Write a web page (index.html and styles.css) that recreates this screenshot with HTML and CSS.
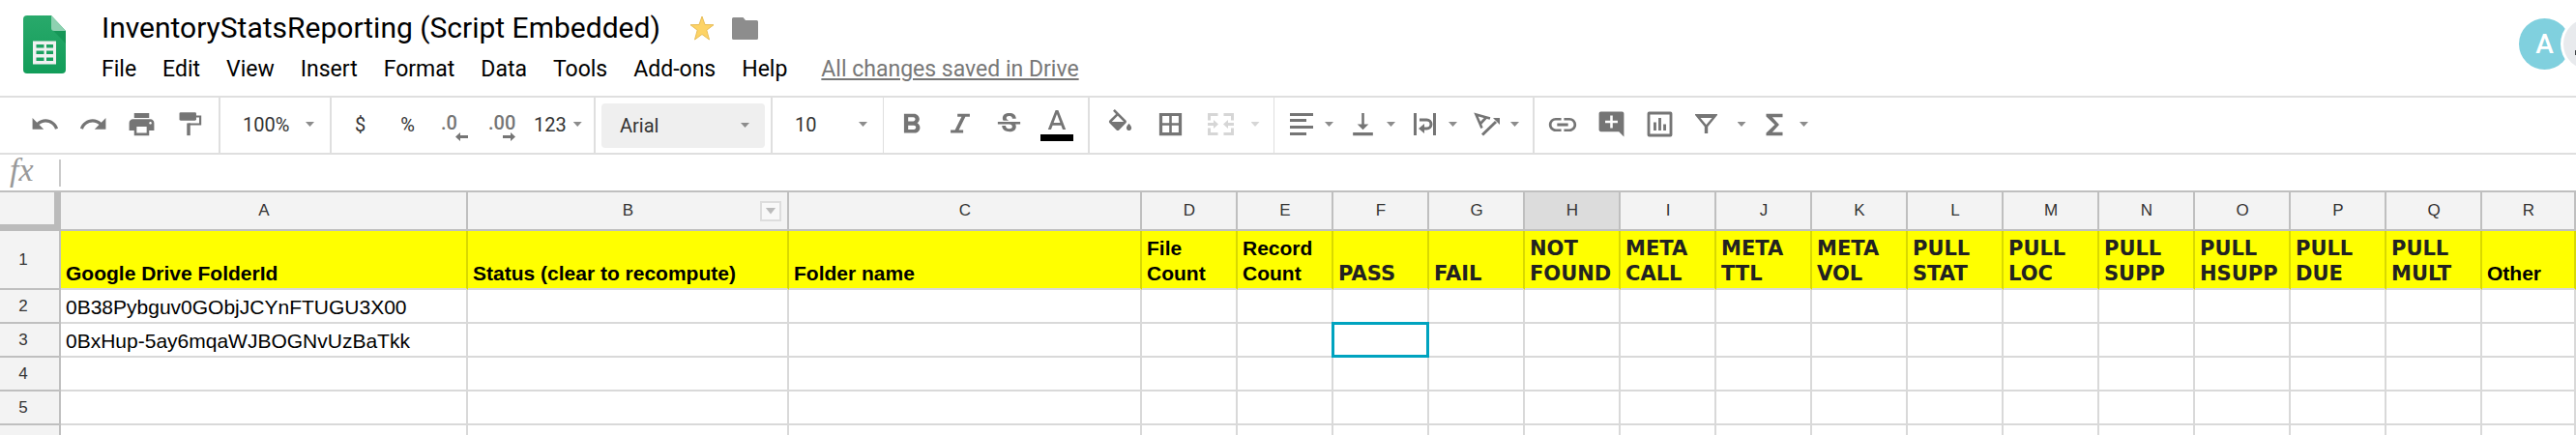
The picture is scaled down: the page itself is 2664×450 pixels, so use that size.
FILE: index.html
```html
<!DOCTYPE html>
<html lang="en">
<head>
<meta charset="utf-8">
<title>InventoryStatsReporting (Script Embedded)</title>
<link rel="stylesheet" href="styles.css">
</head>
<body>
<header class="header">
  <svg class="logo" viewBox="0 0 44 60" aria-hidden="true">
    <defs><linearGradient id="green" x1="0" y1="0" x2="0" y2="1"><stop offset="0" stop-color="#29a96b"/><stop offset="1" stop-color="#129d59"/></linearGradient></defs>
    <path fill="url(#green)" d="M4 0H29L44 16V56a4 4 0 0 1-4 4H4a4 4 0 0 1-4-4V4a4 4 0 0 1 4-4z"/>
    <path fill="#0c8a4c" opacity=".55" d="M30 14.500 44 29V16z"/>
    <path fill="#8ed1b1" d="M29 0 44 16H32a3 3 0 0 1-3-3z"/>
    <path fill="#f1f1f1" fill-rule="evenodd" d="M10 26.500h24v24H10zM13.500 30v3.500h8V30zM24 30v3.500h7V30zM13.500 36.500V40h8v-3.500zM24 36.500V40h7v-3.500zM13.500 43.500V47h8v-3.500zM24 43.500V47h7v-3.500z"/>
  </svg>
  <div class="heading">
    <div class="title-row">
      <h1 class="title">InventoryStatsReporting (Script Embedded)</h1>
      <button class="plain" aria-label="Star"><svg class="star" viewBox="0 0 26 26"><path fill="#fdd365" stroke="#e8bd57" d="M13 1l3 8.500 9 .2-7.200 5.500L20.500 25 13 19.500 5.500 25l2.700-9.800L1 9.700l9-.2z"/></svg></button>
      <button class="plain" aria-label="Move to folder"><svg class="folder" viewBox="0 0 27 23"><path fill="#8d8d8d" d="M1.500 0h10L14 3h11.500A1.500 1.500 0 0 1 27 4.500v17a1.500 1.500 0 0 1-1.500 1.500h-24A1.500 1.500 0 0 1 0 21.500v-20A1.500 1.500 0 0 1 1.500 0z"/></svg></button>
    </div>
    <nav class="menu">
      <button class="plain">File</button><button class="plain">Edit</button><button class="plain">View</button><button class="plain">Insert</button><button class="plain">Format</button><button class="plain">Data</button><button class="plain">Tools</button><button class="plain">Add-ons</button><button class="plain">Help</button>
      <a class="saved" href="#">All changes saved in Drive</a>
    </nav>
  </div>
  <div class="people">
    <span class="avatar avatar-a">A</span>
    <span class="avatar avatar-b"><svg viewBox="0 0 53 53"><path fill="#3c4043" d="M12 33h29v5H12z"/></svg></span>
  </div>
</header>

<div class="toolbar">
  <div class="group history">
    <button class="tool" aria-label="Undo"><svg class="icon" viewBox="0 0 24 24"><path d="M12.500 8c-2.650 0-5.050.99-6.900 2.600L2 7v9h9l-3.620-3.620c1.390-1.160 3.160-1.880 5.120-1.880 3.540 0 6.550 2.310 7.600 5.500l2.370-.78C21.080 11.030 17.150 8 12.500 8z"/></svg></button>
    <button class="tool" aria-label="Redo"><svg class="icon" viewBox="0 0 24 24"><path d="M18.400 10.600C16.550 8.990 14.150 8 11.500 8c-4.650 0-8.580 3.030-9.960 7.220L3.900 16c1.050-3.190 4.050-5.500 7.600-5.500 1.950 0 3.730.72 5.120 1.880L13 16h9V7l-3.600 3.600z"/></svg></button>
    <button class="tool" aria-label="Print"><svg class="icon" viewBox="0 0 24 24"><path d="M19 8H5c-1.660 0-3 1.340-3 3v6h4v4h12v-4h4v-6c0-1.660-1.340-3-3-3zm-3 11H8v-5h8v5zm3-7c-.55 0-1-.45-1-1s.45-1 1-1 1 .45 1 1-.45 1-1 1zm-1-9H6v4h12V3z"/></svg></button>
    <button class="tool" aria-label="Paint format"><svg class="icon" viewBox="0 0 24 24"><rect x="3.500" y="2.500" width="13.500" height="6.500" rx="1"/><path fill="none" stroke="#757575" stroke-width="1.700" d="M17 5.800h3.200v6.200h-9.600"/><path d="M9.500 11.200h2.700V21H9.500z"/></svg></button>
  </div>
  <div class="group zoom">
    <label class="pick"><select aria-label="Zoom"><option>100%</option></select><i class="caret"></i></label>
  </div>
  <div class="group numbers">
    <button class="tool">$</button>
    <button class="tool">%</button>
    <button class="tool decimals" aria-label="Decrease decimal places"><span>.0</span><svg class="shift" viewBox="0 0 13 9"><path d="M0 4.500 5 0v3h8v3H5v3z"/></svg></button>
    <button class="tool decimals" aria-label="Increase decimal places"><span>.00</span><svg class="shift" viewBox="0 0 13 9"><path d="M13 4.500 8 0v3H0v3h8v3z"/></svg></button>
    <button class="formats">123<i class="caret"></i></button>
  </div>
  <div class="group family">
    <label class="pick filled"><select aria-label="Font"><option>Arial</option></select><i class="caret"></i></label>
  </div>
  <div class="group size">
    <label class="pick"><select aria-label="Font size"><option>10</option></select><i class="caret"></i></label>
  </div>
  <div class="group style">
    <button class="tool" aria-label="Bold"><svg class="icon large" viewBox="0 0 24 24"><path d="M15.900 10.790c.97-.67 1.650-1.770 1.650-2.790 0-2.260-1.750-4-4-4H6.300v14h7.740c2.090 0 3.910-1.700 3.910-3.790 0-1.520-.86-2.820-2.050-3.420zM9.300 6.500h3.700c.83 0 1.500.67 1.500 1.500s-.67 1.500-1.500 1.500H9.300v-3zm4.200 9H9.300v-3h4.200c.83 0 1.500.67 1.500 1.500s-.67 1.500-1.500 1.500z"/></svg></button>
    <button class="tool" aria-label="Italic"><svg class="icon large" viewBox="0 0 24 24"><path d="M10 4h9v2.200h-3.200L11 15.800h3.200V18H5v-2.200h3.200L13 6.200h-3z"/></svg></button>
    <button class="tool" aria-label="Strikethrough"><svg class="icon" viewBox="0 0 24 24"><path d="M7.240 8.750c-.26-.48-.39-1.030-.39-1.670 0-.61.13-1.160.4-1.670.26-.5.63-.93 1.110-1.290.48-.35 1.050-.63 1.700-.83.66-.19 1.390-.29 2.180-.29.81 0 1.540.11 2.210.34.66.22 1.230.54 1.690.94.47.4.83.88 1.080 1.430.25.55.38 1.150.38 1.810h-3.010c0-.31-.05-.59-.15-.85-.09-.27-.24-.49-.44-.68-.2-.19-.45-.33-.75-.44-.3-.1-.66-.16-1.060-.16-.39 0-.74.04-1.030.13-.29.09-.53.21-.72.36-.19.16-.34.34-.44.55-.1.21-.15.43-.15.66 0 .48.25.88.74 1.210.38.25.77.48 1.410.7H7.390c-.05-.08-.11-.17-.15-.25zM21 12v-2H3v2h9.620c.18.07.4.14.55.2.37.17.66.34.87.51.21.17.35.36.43.57.07.2.11.43.11.69 0 .23-.05.45-.14.66-.09.2-.23.38-.42.53-.19.15-.42.26-.71.35-.29.08-.63.13-1.010.13-.43 0-.83-.04-1.180-.13s-.66-.23-.91-.42c-.25-.19-.45-.44-.59-.75-.14-.31-.25-.76-.25-1.210H6.400c0 .55.08 1.130.24 1.580.16.45.37.85.65 1.210.28.35.6.66.98.92.37.26.78.48 1.220.65.44.17.9.3 1.380.39.48.08.96.13 1.440.13.8 0 1.530-.09 2.180-.28s1.210-.45 1.670-.79c.46-.34.82-.77 1.070-1.270s.38-1.070.38-1.710c0-.6-.1-1.140-.31-1.610-.05-.11-.11-.23-.17-.33H21z"/></svg></button>
    <button class="tool" aria-label="Text color"><svg class="text-color" viewBox="0 0 34 36"><path d="M15.600 3 7.800 23H11l1.600-4.300h8.800L23 23h3.200L18.400 3zm-2 13L17 7l3.400 9z"/><path fill="#000" d="M0 28h34v7H0z"/></svg></button>
  </div>
  <div class="group cells">
    <button class="tool" aria-label="Fill color"><svg class="icon" viewBox="0 0 24 24"><path d="M16.560 8.940L7.620 0 6.210 1.410l2.380 2.380-5.150 5.150c-.59.59-.59 1.540 0 2.120l5.500 5.500c.29.29.68.44 1.060.44s.77-.15 1.060-.44l5.500-5.500c.59-.58.59-1.530 0-2.120zM5.210 10L10 5.210 14.790 10H5.210zM19 11.500s-2 2.170-2 3.500c0 1.100.9 2 2 2s2-.9 2-2c0-1.330-2-3.500-2-3.500z"/></svg></button>
    <button class="tool" aria-label="Borders"><svg class="icon" viewBox="0 0 24 24"><path d="M3 3v18h18V3H3zm8 15.500H5.500V13H11v5.500zm0-7.500H5.500V5.500H11V11zm7.500 7.500H13V13h5.500v5.500zm0-7.500H13V5.500h5.500V11z"/></svg></button>
    <button class="tool faint" aria-label="Merge cells" disabled><svg class="merge" viewBox="0 0 27 23"><path fill="none" stroke="#d6d6d6" stroke-width="3" d="M10.500 1.500h-9v6M16.500 1.500h9v6M1.500 15.500v6h9M25.500 15.500v6h-9"/><path d="M0 10h6V7l5 4.500L6 16v-3H0zM27 10h-6V7l-5 4.500 5 4.500v-3h6z"/></svg></button>
    <button class="more faint" aria-label="Merge options" disabled><i class="caret"></i></button>
  </div>
  <div class="group layout">
    <button class="drop" aria-label="Horizontal align"><svg class="icon" viewBox="0 0 31 31"><path d="M4 4h24v3H4zM4 10h17v3H4zM4 17h24v3H4zM4 24h17v3H4z"/></svg><i class="caret"></i></button>
    <button class="drop" aria-label="Vertical align"><svg class="icon" viewBox="0 0 24 24"><path d="M16.500 12H13V3h-2v9H7.500l4.500 4.500zM4 18.500V21h16v-2.500z"/></svg><i class="caret"></i></button>
    <button class="drop" aria-label="Text wrapping"><svg class="icon" viewBox="0 0 31 31"><path d="M4 4h3v23H4zM24 4h3v23h-3zM9 20l6-5v10z"/><path fill="none" stroke="#757575" stroke-width="3" d="M10 11h7.500a4.500 4.500 0 0 1 0 9H14"/></svg><i class="caret"></i></button>
    <button class="drop" aria-label="Text rotation"><svg class="icon" viewBox="0 0 31 31"><path fill="none" stroke="#757575" stroke-width="2.600" d="M19 9.500 4.500 5.500l6 14M8.500 15.500l6-6.500"/><path fill="none" stroke="#757575" stroke-width="3" d="M11 26.500 25 13"/><path d="M29 9v7l-7-7z"/></svg><i class="caret"></i></button>
  </div>
  <div class="group insert">
    <button class="tool" aria-label="Insert link"><svg class="icon large" viewBox="0 0 24 24"><path d="M3.900 12c0-1.710 1.390-3.100 3.100-3.100h4V7H7c-2.760 0-5 2.240-5 5s2.240 5 5 5h4v-1.900H7c-1.710 0-3.100-1.390-3.100-3.100zM8 13h8v-2H8v2zm9-6h-4v1.900h4c1.710 0 3.100 1.390 3.100 3.100s-1.390 3.100-3.100 3.100h-4V17h4c2.760 0 5-2.240 5-5s-2.240-5-5-5z"/></svg></button>
    <button class="tool" aria-label="Insert comment"><svg class="icon" viewBox="0 0 24 24"><path d="M22 3.500c0-.8-.7-1.500-1.500-1.500h-17C2.700 2 2 2.700 2 3.500v13c0 .8.7 1.500 1.500 1.500H18l4 4zM17 11h-4v4h-2v-4H7V9h4V5h2v4h4z"/></svg></button>
    <button class="tool" aria-label="Insert chart"><svg class="icon" viewBox="0 0 24 24"><path fill-rule="evenodd" d="M3.500 2h17A1.500 1.500 0 0 1 22 3.500v17a1.500 1.500 0 0 1-1.500 1.500h-17A1.500 1.500 0 0 1 2 20.500v-17A1.500 1.500 0 0 1 3.500 2zM4.200 4.200v15.600h15.600V4.200zM7 10.500h2.200V17H7zM10.900 7h2.200v10h-2.200zM14.800 12H17v5h-2.200z"/></svg></button>
    <button class="tool" aria-label="Filter"><svg class="icon" viewBox="0 0 31 31"><path fill-rule="evenodd" d="M2 5h23v1l-9.800 12v7h-3.400v-7L2 6zM7.500 9l6 7 6-7z"/></svg></button>
    <button class="more" aria-label="Filter views"><i class="caret"></i></button>
    <button class="drop sum" aria-label="Functions"><svg class="icon large" viewBox="0 0 24 24"><path d="M18 4H6v2l6.300 6L6 18v2h12v-2.500h-7.500l5-5.500-5-5.500H18z"/></svg><i class="caret"></i></button>
  </div>
</div>

<div class="formula-bar">
  <label class="fx" for="formula">fx</label>
  <input id="formula" class="formula" type="text">
</div>

<main class="sheet">
<table class="grid">
  <colgroup><col class="col-index"><col class="col-id"><col class="col-status"><col class="col-folder"><col class="col-n" span="14"><col></colgroup>
  <thead>
    <tr><th class="corner"></th><th>A</th><th><div class="col-head"><span>B</span><button class="col-menu" aria-label="Column options"></button></div></th><th>C</th><th>D</th><th>E</th><th>F</th><th>G</th><th class="active">H</th><th>I</th><th>J</th><th>K</th><th>L</th><th>M</th><th>N</th><th>O</th><th>P</th><th>Q</th><th>R</th></tr>
  </thead>
  <tbody>
    <tr class="titles"><th>1</th><td>Google Drive FolderId</td><td>Status (clear to recompute)</td><td>Folder name</td><td>File Count</td><td>Record Count</td><td class="code">PASS</td><td class="code">FAIL</td><td class="code">NOT FOUND</td><td class="code">META CALL</td><td class="code">META TTL</td><td class="code">META VOL</td><td class="code">PULL STAT</td><td class="code">PULL LOC</td><td class="code">PULL SUPP</td><td class="code">PULL HSUPP</td><td class="code">PULL DUE</td><td class="code">PULL MULT</td><td>Other</td></tr>
    <tr><th>2</th><td>0B38Pybguv0GObjJCYnFTUGU3X00</td><td></td><td></td><td></td><td></td><td></td><td></td><td></td><td></td><td></td><td></td><td></td><td></td><td></td><td></td><td></td><td></td><td></td></tr>
    <tr><th>3</th><td>0BxHup-5ay6mqaWJBOGNvUzBaTkk</td><td></td><td></td><td></td><td></td><td class="selected"></td><td></td><td></td><td></td><td></td><td></td><td></td><td></td><td></td><td></td><td></td><td></td><td></td></tr>
    <tr><th>4</th><td></td><td></td><td></td><td></td><td></td><td></td><td></td><td></td><td></td><td></td><td></td><td></td><td></td><td></td><td></td><td></td><td></td><td></td></tr>
    <tr><th>5</th><td></td><td></td><td></td><td></td><td></td><td></td><td></td><td></td><td></td><td></td><td></td><td></td><td></td><td></td><td></td><td></td><td></td><td></td></tr>
    <tr><th></th><td></td><td></td><td></td><td></td><td></td><td></td><td></td><td></td><td></td><td></td><td></td><td></td><td></td><td></td><td></td><td></td><td></td><td></td></tr>
  </tbody>
</table>
</main>
</body>
</html>
```
FILE: styles.css
```css
* { box-sizing: border-box; }

body {
  margin: 0;
  height: 100vh;
  display: flex;
  flex-direction: column;
  overflow: hidden;
  background: #fff;
  color: #000;
  font-family: Roboto, "Liberation Sans", sans-serif;
}

button, select, input { font: inherit; color: inherit; margin: 0; padding: 0; border: 0; background: none; }
button { display: flex; align-items: center; justify-content: center; }
svg { display: block; }

/* Header */
.header {
  flex: none;
  display: flex;
  align-items: flex-start;
  height: 101px;
  padding: 0 0 0 24px;
  border-bottom: 2px solid #dfdfdf;
  overflow: hidden;
}
.logo { width: 44px; height: 60px; margin: 16px 37px 0 0; }
.heading { padding-top: 11px; }
.title-row { display: flex; align-items: center; height: 36px; gap: 18px; }
.title { margin: 0 12px 0 0; font-size: 30px; line-height: 36px; font-weight: 400; white-space: nowrap; }
.star { width: 26px; height: 26px; }
.folder { width: 27px; height: 23px; }
.menu { display: flex; align-items: center; gap: 27px; margin-top: 12px; font-size: 23px; line-height: 26px; white-space: nowrap; }
.saved { margin-left: 8px; color: #777; text-underline-offset: 2px; }
.people { display: flex; margin: 19px -40px 0 auto; }
.avatar { display: flex; align-items: center; justify-content: center; width: 53px; height: 53px; border-radius: 50%; color: #fff; font-size: 28px; }
.avatar-a { background: #80d0de; font-weight: 500; }
.avatar-b { margin-left: -7px; background: #e8eaed; box-shadow: 0 0 0 3px #fff; overflow: hidden; }

/* Toolbar */
.toolbar {
  flex: none;
  display: flex;
  height: 59px;
  border-bottom: 2px solid #dfdfdf;
  color: #333;
  font-size: 20px;
}
.group { display: flex; flex: none; align-items: center; padding-bottom: 2px; border-right: 2px solid #dfdfdf; }
.history { padding-left: 21px; padding-right: 5px; }
.zoom { width: 115px; }
.numbers { width: 273px; padding-left: 5px; }
.family { width: 183px; padding: 0 6px; }
.size { width: 115px; border-right-width: 1px; }
.style { padding-left: 4px; padding-right: 7px; }
.cells { width: 191px; padding-left: 5px; border-right-width: 1px; }
.layout { width: 269px; padding-left: 12px; gap: 15px; }
.insert { padding-left: 4px; border-right: 0; }

.tool { width: 50px; height: 46px; }
.numbers .tool { width: 49px; }
.cells .tool { width: 52px; }
.icon { width: 31px; height: 31px; }
.icon.large { width: 34px; height: 34px; }
.toolbar svg { fill: #757575; flex: none; }
.toolbar .faint svg { fill: #d6d6d6; }
.text-color { width: 34px; height: 36px; }
.merge { width: 27px; height: 23px; }

.caret { flex: none; width: 9px; height: 5px; background: #8c8c8c; clip-path: polygon(0 0, 100% 0, 50% 100%); }
.faint .caret { background: #d6d6d6; }
.more { width: 20px; height: 46px; }
.drop { gap: 9px; height: 46px; }
.sum { margin-left: 7px; }
.formats { gap: 7px; padding-left: 8px; }

.decimals { flex-direction: column; align-items: flex-start; padding: 5px 11px 0 10px; color: #757575; font-weight: 500; line-height: 20px; }
.shift { width: 13px; height: 9px; align-self: flex-end; }

.pick { display: grid; align-items: center; width: 100%; height: 46px; }
.pick select, .pick .caret { grid-area: 1 / 1; }
.pick select { appearance: none; width: 100%; height: 100%; padding-left: 23px; }
.pick .caret { justify-self: end; margin-right: 16px; }
.filled { background: #efefef; border-radius: 4px; }
.filled select { padding-left: 19px; }

/* Formula bar */
.formula-bar { flex: none; display: flex; align-items: center; height: 37px; }
.fx { width: 61px; padding: 0 0 6px 10px; color: #999; font: italic 34px/30px "Liberation Serif", serif; }
.formula { flex: 1; height: 28px; padding-left: 8px; border-left: 2px solid #c9c9c9; font: 20px "Liberation Sans", sans-serif; outline: 0; }

/* Grid */
.sheet { flex: 1; min-height: 0; overflow: hidden; border-top: 2px solid #bfbfbf; }
.grid { width: 100%; table-layout: fixed; border-collapse: separate; border-spacing: 0; font: 21px/26px "Liberation Sans", Arial, sans-serif; }
.col-index { width: 63px; }
.col-id { width: 421px; }
.col-status { width: 332px; }
.col-folder { width: 365px; }
.col-n { width: 99px; }
.grid th { height: 35px; padding: 0; border: solid #bfbfbf; border-width: 0 2px 2px 0; background: #f3f3f3; color: #333; font-size: 17px; font-weight: 400; }
.grid thead th { height: 40px; padding-left: 1px; }
.grid thead .corner { border: solid #bbb; border-width: 0 7px 7px 0; }
.grid thead .active { background: #dcdcdc; }
.grid tbody th { padding-right: 13px; }
.grid td { height: 35px; padding: 0 5px 2px; border: solid #d9d9d9; border-width: 0 2px 2px 0; vertical-align: bottom; white-space: nowrap; }
.grid .titles td { height: 61px; background: #ff0; border-right-color: #d9d900; font-weight: 700; white-space: normal; }
.grid .titles .code { color: #222; font-family: Verdana, "DejaVu Sans", sans-serif; }

.col-head { display: grid; align-items: center; }
.col-head > * { grid-area: 1 / 1; }
.col-menu { justify-self: end; width: 22px; height: 21px; margin-right: 6px; border: 2px solid #ddd; background: #f8f8f8; }
.col-menu::before { content: ""; width: 11px; height: 7px; background: #bbb; clip-path: polygon(0 0, 100% 0, 50% 100%); }

.selected { position: relative; }
.selected::after { content: ""; position: absolute; inset: -2px; border: 3px solid #00a3bf; }
```
